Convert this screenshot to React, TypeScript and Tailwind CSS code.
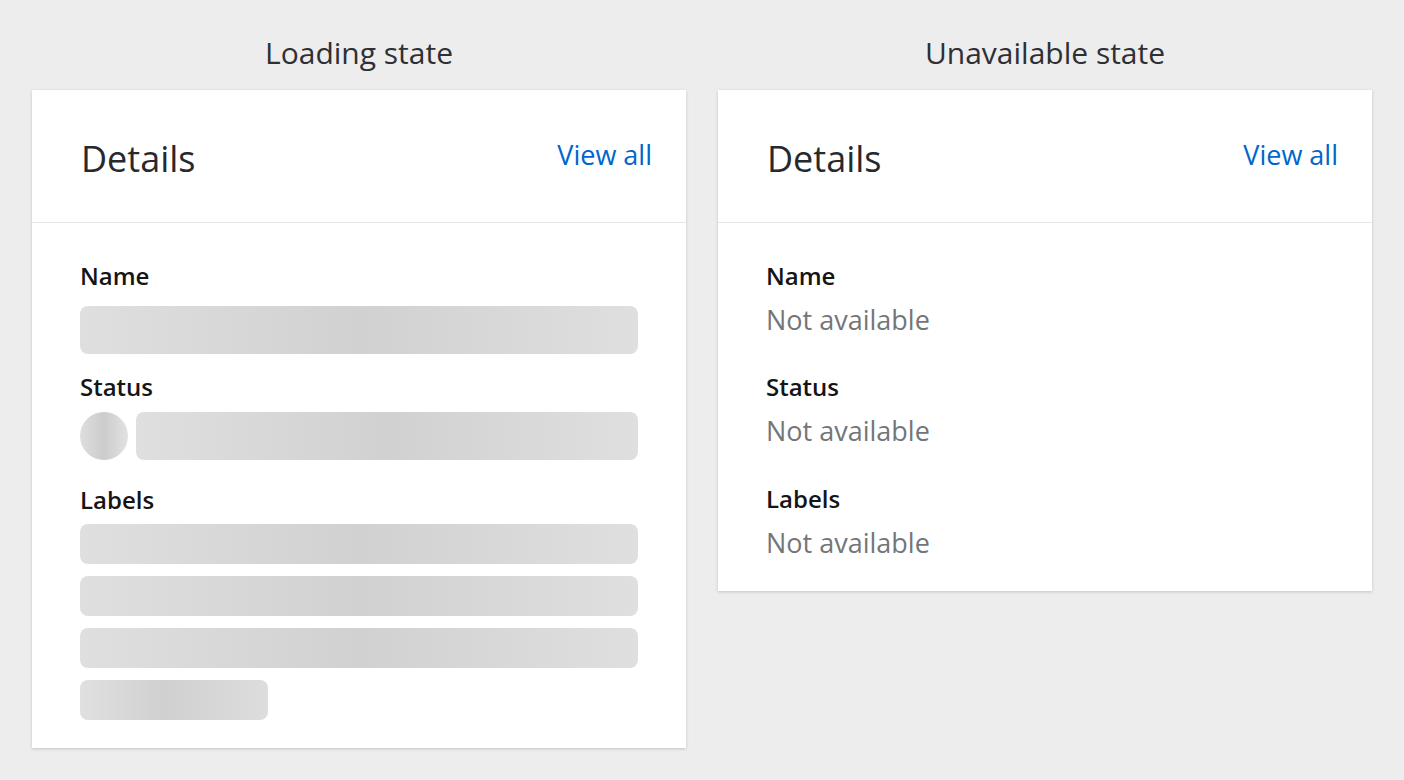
import React from 'react';

const font = { fontFamily: '"Open Sans", Lato, sans-serif' };

const Skeleton: React.FC<{ className?: string }> = ({ className = '' }) => (
  <div
    className={`bg-linear-to-r from-[#dfdfdf] via-[#d1d1d1] to-[#dfdfdf] rounded-[8px] ${className}`}
  />
);

const CardHeader: React.FC = () => (
  <div className="flex items-start justify-between pl-[49px] pr-[34px] pt-[47px] pb-[41px] border-b border-[#e6e6e6]">
    <h2 className="text-[36px] leading-[44px] font-medium text-[#26292d]">Details</h2>
    <a className="text-[27px] leading-[36px] text-[#0066cc] cursor-pointer">View all</a>
  </div>
);

const Label: React.FC<{ children: React.ReactNode }> = ({ children }) => (
  <div className="text-[24px] leading-[30px] font-semibold text-[#151515]">{children}</div>
);

const LoadingCard: React.FC = () => (
  <div className="bg-white shadow-[0_1px_3px_rgba(0,0,0,0.18)]">
    <CardHeader />
    <div className="pl-[48px] pr-[48px] pt-[38px] pb-[28px]">
      <Label>Name</Label>
      <Skeleton className="mt-[15px] h-[48px]" />
      <div className="mt-[18px]">
        <Label>Status</Label>
      </div>
      <div className="mt-[10px] flex gap-[8px]">
        <div className="w-[48px] h-[48px] rounded-full bg-linear-to-r from-[#dedede] via-[#cccccc] to-[#e2e2e2]" />
        <Skeleton className="flex-1 h-[48px]" />
      </div>
      <div className="mt-[25px]">
        <Label>Labels</Label>
      </div>
      <div className="mt-[9px] flex flex-col gap-[12px]">
        <Skeleton className="h-[40px]" />
        <Skeleton className="h-[40px]" />
        <Skeleton className="h-[40px]" />
        <div className="w-[188px] h-[40px] rounded-[8px] bg-linear-to-r from-[#e0e0e0] via-[#d0d0d0] via-45% to-[#dddddd]" />
      </div>
    </div>
  </div>
);

const Field: React.FC<{ label: string; gap?: string }> = ({ label, gap = '' }) => (
  <div className={gap}>
    <Label>{label}</Label>
    <div className="mt-[11px] text-[27px] leading-[36px] text-[#737679]">Not available</div>
  </div>
);

const UnavailableCard: React.FC = () => (
  <div className="bg-white shadow-[0_1px_3px_rgba(0,0,0,0.18)]">
    <CardHeader />
    <div className="pl-[48px] pr-[48px] pt-[38px] pb-[30px]">
      <Field label="Name" />
      <Field label="Status" gap="mt-[34px]" />
      <Field label="Labels" gap="mt-[35px]" />
    </div>
  </div>
);

const Column: React.FC<{ title: string; children: React.ReactNode }> = ({ title, children }) => (
  <div className="w-[654px]">
    <div className="pt-[35px] mb-[19px] text-center text-[30px] leading-[36px] text-[#2e3034]">{title}</div>
    {children}
  </div>
);

export default function App() {
  return (
    <div className="min-h-screen bg-[#ededed] flex items-start gap-[32px] px-[32px]" style={font}>
      <Column title="Loading state">
        <LoadingCard />
      </Column>
      <Column title="Unavailable state">
        <UnavailableCard />
      </Column>
    </div>
  );
}
